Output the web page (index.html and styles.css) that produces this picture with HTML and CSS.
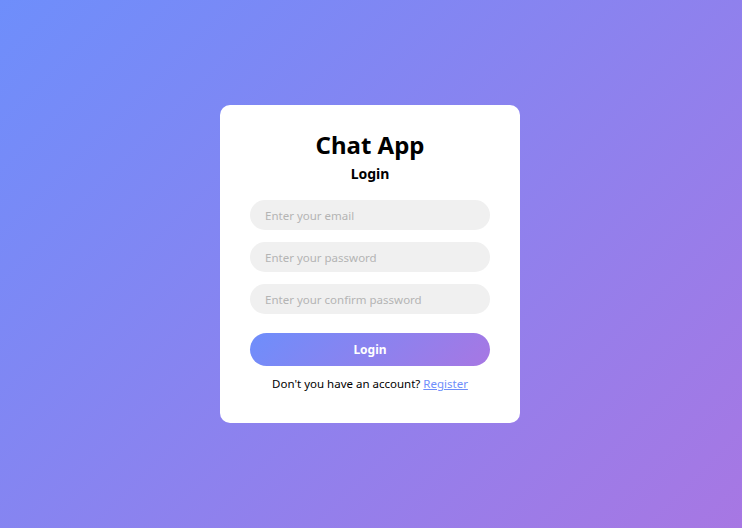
FILE: index.html
```html
<!DOCTYPE html>
<html lang="en">

<head>
    <meta charset="UTF-8">
    <meta name="viewport" content="width=device-width, initial-scale=1.0">
    <title>Chat App - Login</title>
    <link rel="stylesheet" href="styles.css">
</head>

<body>
    <div class="card">
        <h1 class="title">Chat App</h1>
        <h2 class="subtitle">Login</h2>
        <form class="form">
            <input type="email" placeholder="Enter your email">
            <input type="password" placeholder="Enter your password">
            <input type="password" placeholder="Enter your confirm password">
            <button type="button" class="btn">Login</button>
        </form>
        <p class="switch">Don't you have an account? <a href="#">Register</a></p>
    </div>
</body>

</html>
```

FILE: styles.css
```css
* {
    box-sizing: border-box;
}

html,
body {
    height: 100%;
}

body {
    margin: 0;
    display: flex;
    align-items: center;
    justify-content: center;
    background: linear-gradient(135deg, #6e8efb, #a777e3);
    font-family: "Noto Sans", "Open Sans", sans-serif;
}

.card {
    width: 300px;
    margin-right: 2px;
    background: #fff;
    border-radius: 10px;
    padding: 25px 30px 31px;
    text-align: center;
}

.title {
    margin: 0;
    font-size: 24px;
    line-height: 30px;
    font-weight: 700;
    color: #000;
}

.subtitle {
    margin: 4px 0 0;
    font-size: 14px;
    line-height: 20px;
    font-weight: 700;
    color: #000;
}

.form {
    display: flex;
    flex-direction: column;
    gap: 12px;
    margin-top: 16px;
}

.form input {
    height: 30px;
    border: none;
    outline: none;
    border-radius: 15px;
    background: #f0f0f0;
    padding: 0 15px;
    font-family: inherit;
    font-size: 11.5px;
    color: #333;
}

.form input::placeholder {
    color: #b4b4b4;
}

.btn {
    margin-top: 7px;
    height: 33px;
    border: none;
    border-radius: 17px;
    background: linear-gradient(135deg, #6e8efb, #a777e3);
    color: #fff;
    font-family: inherit;
    font-size: 12px;
    font-weight: 700;
}

.switch {
    margin: 10px 0 0;
    font-size: 11.5px;
    line-height: 16px;
    color: #000;
}

.switch a {
    color: #6e8efb;
}
```
